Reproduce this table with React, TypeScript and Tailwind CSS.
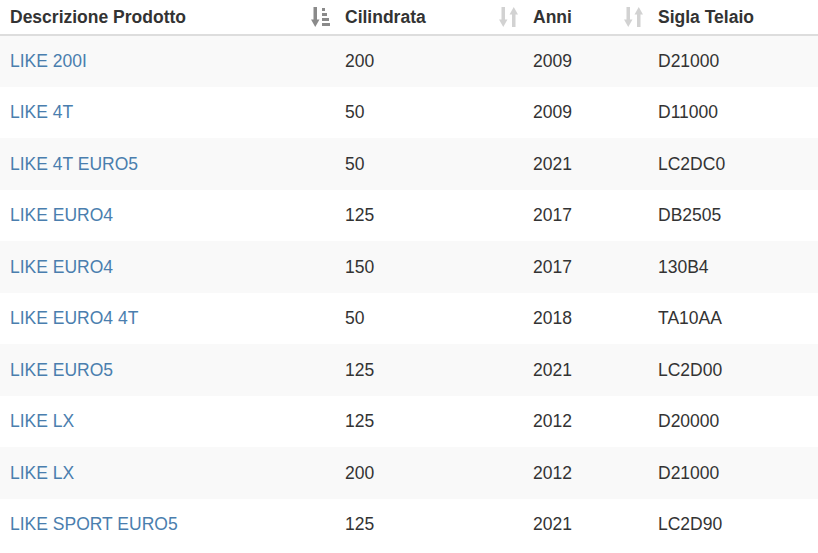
const rows = [
  { name: "LIKE 200I", cc: "200", year: "2009", frame: "D21000" },
  { name: "LIKE 4T", cc: "50", year: "2009", frame: "D11000" },
  { name: "LIKE 4T EURO5", cc: "50", year: "2021", frame: "LC2DC0" },
  { name: "LIKE EURO4", cc: "125", year: "2017", frame: "DB2505" },
  { name: "LIKE EURO4", cc: "150", year: "2017", frame: "130B4" },
  { name: "LIKE EURO4 4T", cc: "50", year: "2018", frame: "TA10AA" },
  { name: "LIKE EURO5", cc: "125", year: "2021", frame: "LC2D00" },
  { name: "LIKE LX", cc: "125", year: "2012", frame: "D20000" },
  { name: "LIKE LX", cc: "200", year: "2012", frame: "D21000" },
  { name: "LIKE SPORT EURO5", cc: "125", year: "2021", frame: "LC2D90" },
];

function SortActive() {
  return (
    <svg width="19" height="20" viewBox="0 0 19 20" className="shrink-0">
      <g fill="#8a8a8a">
        <rect x="2.5" y="0" width="3.5" height="14" />
        <polygon points="0,12.5 8.5,12.5 4.25,20" />
        <rect x="11" y="1" width="3" height="3" />
        <rect x="11" y="6" width="5" height="3" />
        <rect x="11" y="11" width="7" height="3" />
        <rect x="11" y="16" width="8" height="3" />
      </g>
    </svg>
  );
}

function SortIdle() {
  return (
    <svg width="19" height="20" viewBox="0 0 19 20" className="shrink-0">
      <g fill="#d2d2d2">
        <rect x="2.5" y="0" width="3.5" height="14" />
        <polygon points="0,12.5 8.5,12.5 4.25,20" />
        <rect x="13" y="6" width="3.5" height="14" />
        <polygon points="10.5,7.5 19,7.5 14.75,0" />
      </g>
    </svg>
  );
}

export default function App() {
  return (
    <div className="w-[818px] h-[553px] overflow-hidden bg-white font-['Liberation_Sans',Arial,sans-serif] text-[17.5px] text-[#333333]">
      <table className="w-full table-fixed">
        <thead>
          <tr className="border-b-2 border-[#dddddd]">
            <th className="w-[335px] h-[35px] pl-[10px] pr-[5px] text-left font-bold">
              <div className="flex items-center justify-between">
                <span>Descrizione Prodotto</span>
                <SortActive />
              </div>
            </th>
            <th className="w-[188px] h-[35px] pl-[10px] pr-[5px] text-left font-bold">
              <div className="flex items-center justify-between">
                <span>Cilindrata</span>
                <SortIdle />
              </div>
            </th>
            <th className="w-[125px] h-[35px] pl-[10px] pr-[5px] text-left font-bold">
              <div className="flex items-center justify-between">
                <span>Anni</span>
                <SortIdle />
              </div>
            </th>
            <th className="h-[35px] pl-[10px] text-left font-bold">Sigla Telaio</th>
          </tr>
        </thead>
        <tbody>
          {rows.map((r, i) => (
            <tr key={i} className={i % 2 === 0 ? "bg-[#f9f9f9]" : "bg-white"}>
              <td className="h-[51.5px] px-[10px] align-middle">
                <a href="#" className="text-[#4a7eae]">{r.name}</a>
              </td>
              <td className="h-[51.5px] px-[10px] align-middle">{r.cc}</td>
              <td className="h-[51.5px] px-[10px] align-middle">{r.year}</td>
              <td className="h-[51.5px] px-[10px] align-middle">{r.frame}</td>
            </tr>
          ))}
        </tbody>
      </table>
    </div>
  );
}
